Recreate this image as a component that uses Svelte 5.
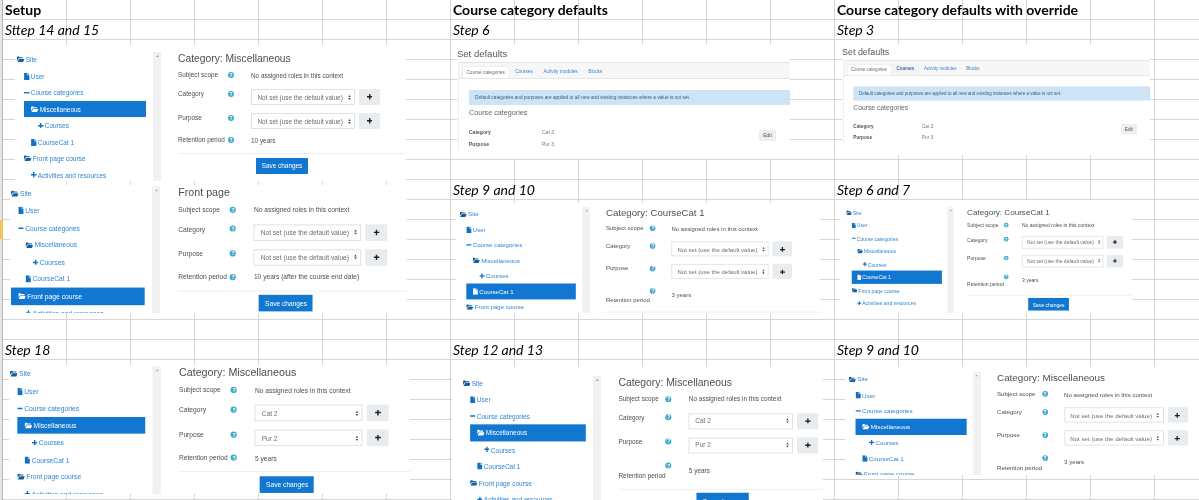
<script lang="ts">
	const tree = [
		{ label: 'Site', depth: 0, icon: 'folder' },
		{ label: 'User', depth: 1, icon: 'file' },
		{ label: 'Course categories', depth: 1, icon: 'minus' },
		{ label: 'Miscellaneous', depth: 2, icon: 'folder' },
		{ label: 'Courses', depth: 3, icon: 'plus' },
		{ label: 'CourseCat 1', depth: 2, icon: 'file' },
		{ label: 'Front page course', depth: 1, icon: 'folder' },
		{ label: 'Activities and resources', depth: 2, icon: 'plus' }
	];

	const notSet = 'Not set (use the default value)';

	// placed on the sheet like pasted pictures: box, scale, first row centre, tree icon x
	const shots = [
		{ x: 15, y: 45, w: 391, h: 136, s: 1, cy: 59.5, ix: 17, tw: 129, sel: 3, title: 'Category: Miscellaneous', cat: notSet, pur: notSet, ret: '10 years', stacked: false, save: true },
		{ x: 10, y: 185, w: 397, h: 128, s: 1.036, cy: 193.7, ix: 11, tw: 129.5, sel: 6, title: 'Front page', cat: notSet, pur: notSet, ret: '10 years (after the course end date)', stacked: false, save: true },
		{ x: 9, y: 365, w: 401, h: 129, s: 1.04, cy: 374, ix: 10, tw: 130.5, sel: 3, title: 'Category: Miscellaneous', cat: 'Cat 2', pur: 'Pur 2', ret: '5 years', stacked: false, save: true },
		{ x: 456, y: 203, w: 364, h: 110, s: 0.936, cy: 214, ix: 460, tw: 124, sel: 5, title: 'Category: CourseCat 1', cat: notSet, pur: notSet, ret: '3 years', stacked: true, save: false },
		{ x: 840, y: 200, w: 292, h: 113, s: 0.784, cy: 212.7, ix: 846, tw: 122.5, sel: 5, title: 'Category: CourseCat 1', cat: notSet, pur: notSet, ret: '3 years', stacked: true, save: true },
		{ x: 452, y: 367, w: 371, h: 133, s: 1.006, cy: 383.3, ix: 463, tw: 122.5, sel: 3, title: 'Category: Miscellaneous', cat: 'Cat 2', pur: 'Pur 2', ret: '5 years', stacked: true, save: true },
		{ x: 845, y: 367, w: 354, h: 108, s: 0.958, cy: 379.3, ix: 849, tw: 122.5, sel: 3, title: 'Category: Miscellaneous', cat: notSet, pur: notSet, ret: '3 years', stacked: true, save: false }
	];

	const defaults = [
		{ x: 457, y: 44, w: 333, h: 115, s: 1, top: 0, hover: false },
		{ x: 842, y: 44, w: 308, h: 111, s: 0.94, top: -1, hover: true }
	];

	const labels = [
		{ text: 'Setup', col: 2, row: 1, head: true },
		{ text: 'Course category defaults', col: 9, row: 1, head: true },
		{ text: 'Course category defaults with override', col: 15, row: 1, head: true },
		{ text: 'Sttep 14 and 15', col: 2, row: 2 },
		{ text: 'Step 6', col: 9, row: 2 },
		{ text: 'Step 3', col: 15, row: 2 },
		{ text: 'Step 9 and 10', col: 9, row: 10 },
		{ text: 'Step 6 and 7', col: 15, row: 10 },
		{ text: 'Step 18', col: 2, row: 18 },
		{ text: 'Step 12 and 13', col: 9, row: 18 },
		{ text: 'Step 9 and 10', col: 15, row: 18 }
	];

	function box(p: { x: number; y: number; w: number; h: number }) {
		return `left:${p.x}px;top:${p.y}px;width:${p.w}px;height:${p.h}px`;
	}
	function inner(p: { w: number; h: number; s: number }) {
		return `width:${p.w / p.s}px;height:${p.h / p.s}px;transform:scale(${p.s})`;
	}
</script>

{#snippet icon(name: string)}
	{#if name === 'folder'}
		<svg class="ico folder" viewBox="0 0 16 14"><path d="M0 2.5C0 1.7.6 1 1.4 1h3.2l1.6 1.6h5.4c.8 0 1.4.6 1.4 1.4v1H4L0 10.500z" /><path d="M4.600 6.200H16l-3 6.800H.8z" /></svg>
	{:else if name === 'file'}
		<svg class="ico file" viewBox="0 0 12 16"><path d="M0 0h7v5h5v11H0z" /><path d="M8 0l4 4H8z" /></svg>
	{:else if name === 'plus'}
		<svg class="ico plus" viewBox="0 0 12 12"><path d="M4.500 0h3v4.500H12v3H7.500V12h-3V7.500H0v-3h4.500z" /></svg>
	{:else}
		<svg class="ico minus" viewBox="0 0 12 12"><path d="M0 4.500h12v3H0z" /></svg>
	{/if}
{/snippet}

{#snippet help()}
	<span class="help">?</span>
{/snippet}

{#snippet field(label: string, value: string)}
	<div class="field">
		<span class="lab">{label}</span>
		{@render help()}
		<div class="control">
			<span class="select">
				<span>{value}</span>
				<svg viewBox="0 0 6 10"><path d="M3 0l2.500 3.800h-5zM3 10L.5 6.200h5z" /></svg>
			</span>
			<span class="add"><svg viewBox="0 0 12 12"><path d="M4.500 0h3v4.500H12v3H7.500V12h-3V7.500H0v-3h4.500z" /></svg></span>
		</div>
	</div>
{/snippet}

<div class="sheet">
	<div class="strip"><span class="marker"></span></div>

	{#each labels as l}
		<div class="cell" class:head={l.head} style="grid-column:{l.col};grid-row:{l.row}">{l.text}</div>
	{/each}

	{#each shots as p}
		<div class="shot" style={box(p)}>
			<div class="inner" class:narrow={p.stacked} style="{inner(p)};padding-top:{(p.cy - p.y) / p.s - 8.25}px;padding-left:{(p.ix - p.x) / p.s}px">
				<ul class="tree" style="width:{p.tw}px">
					{#each tree as t, i}
						<li
							class:sel={i === p.sel}
							style="margin-left:{i === p.sel ? (t.depth - 1) * 7 : 0}px;padding-left:{i === p.sel ? 7 : t.depth * 7}px"
						>
							{@render icon(t.icon)}<span>{t.label}</span>
						</li>
					{/each}
				</ul>
				<div class="track"><svg viewBox="0 0 6 4"><path d="M3 0l3 4H0z" /></svg></div>
				<div class="form">
					<h3>{p.title}</h3>
					<div class="field plain">
						<span class="lab">Subject scope</span>
						{@render help()}
						<span class="val">No assigned roles in this context</span>
					</div>
					{@render field('Category', p.cat)}
					{@render field('Purpose', p.pur)}
					{#if p.stacked}
						<div class="field stack">
							{@render help()}
							<span class="lab">Retention period</span>
							<span class="val">{p.ret}</span>
						</div>
					{:else}
						<div class="field plain ret">
							<span class="lab">Retention period</span>
							{@render help()}
							<span class="val">{p.ret}</span>
						</div>
					{/if}
					<hr />
					{#if p.save}
						<button>Save changes</button>
					{/if}
				</div>
			</div>
		</div>
	{/each}

	{#each defaults as d}
		<div class="shot" style={box(d)}>
			<div class="inner block" style="{inner(d)};margin-top:{d.top}px">
				<h2>Set defaults</h2>
				<div class="card">
					<div class="tabs">
						<span class="tab on">Course categories</span>
						<span class="tab" class:hover={d.hover}>Courses</span>
						<span class="tab">Activity modules</span>
						<span class="tab">Blocks</span>
					</div>
					<div class="pane">
						<div class="alert">Default categories and purposes are applied to all new and existing instances where a value is not set.</div>
						<h4>Course categories</h4>
						<div class="dl">
							<b>Category</b><span>Cat 3</span>
							<b>Purpose</b><span>Pur 3</span>
							<em>Edit</em>
						</div>
					</div>
				</div>
			</div>
		</div>
	{/each}
</div>

<style>
	:global(body) {
		margin: 0;
		background: #fff;
	}

	.sheet {
		position: relative;
		width: 1199px;
		height: 500px;
		overflow: hidden;
		display: grid;
		grid-template-columns: 3px repeat(19, 64px);
		grid-auto-rows: 20px;
		background-color: #fff;
		background-image:
			linear-gradient(to right, #d6d6d6 1px, transparent 1px),
			linear-gradient(to bottom, #d6d6d6 1px, transparent 1px);
		background-size: 64px 100%, 100% 20px;
		background-position: 2px 0, 0 19px;
	}

	.strip {
		grid-column: 1;
		grid-row: 1 / span 25;
		background: #e6e6e6;
		border-right: 1px solid #b4b4b4;
		width: 2px;
		position: relative;
	}

	.marker {
		position: absolute;
		left: 0;
		top: 220px;
		width: 3px;
		height: 19px;
		background: #f3c35c;
	}

	.cell {
		padding-left: 2px;
		font: italic 14px/19px Lato, "Liberation Sans", sans-serif;
		color: #000;
		white-space: nowrap;
		filter: blur(0.2px);
	}

	.head {
		font-style: normal;
		font-weight: 700;
	}

	.shot {
		position: absolute;
		background: #fff;
		overflow: hidden;
		filter: blur(0.3px);
		font-family: "Liberation Sans", Arial, sans-serif;
		color: #4a4f54;
	}

	.inner {
		display: flex;
		box-sizing: border-box;
		transform-origin: 0 0;
		font-size: 6.400px;
	}

	.inner.block {
		display: block;
	}

	.tree {
		list-style: none;
		margin: 0;
		padding: 0;
		flex: none;
		color: #2f86d6;
		font-size: 6.500px;
	}

	.tree li {
		height: 16.500px;
		display: flex;
		align-items: center;
		gap: 1.200px;
		white-space: nowrap;
		box-sizing: border-box;
	}

	.tree li.sel {
		background: #1177d1;
		color: #fff;
	}

	.ico {
		flex: none;
		fill: #1270c4;
	}

	.sel .ico {
		fill: #fff;
	}

	.folder {
		width: 7.500px;
		height: 6.500px;
		fill: #145f9f;
	}

	.file {
		width: 5.500px;
		height: 7px;
	}

	.plus {
		width: 5.500px;
		height: 5.500px;
	}

	.minus {
		width: 5.500px;
		height: 5.500px;
	}

	.track {
		flex: none;
		width: 8px;
		margin-left: 7px;
		margin-top: 0.750px;
		background: #f1f1f1;
		height: 400px;
		text-align: center;
	}

	.track svg {
		width: 3px;
		height: 2px;
		display: block;
		margin: 3px auto 0;
		fill: #a3a3a3;
	}

	.form {
		flex: 1;
		min-width: 0;
		margin-left: 17px;
	}

	h3 {
		margin: 0.750px 0 0;
		font-size: 10.300px;
		line-height: 14px;
		font-weight: 400;
		color: #4a4f54;
		white-space: nowrap;
	}

	.field {
		display: grid;
		grid-template-columns: 48.500px 9px 1fr;
		margin-top: 7px;
		white-space: nowrap;
	}

	.narrow .field {
		grid-template-columns: 45.500px 9px 1fr;
	}

	.field + .field {
		margin-top: 8px;
	}

	.field.plain {
		margin-top: 3px;
		height: 12px;
		align-items: center;
	}

	.field.ret {
		margin-top: 5px;
	}

	.lab {
		line-height: 9px;
	}

	.plain .lab {
		line-height: 12px;
	}

	.help {
		width: 6px;
		height: 6px;
		margin: 1.500px auto 0;
		border-radius: 50%;
		background: #3fa9cf;
		color: #fff;
		font: 700 5px/6px "Liberation Sans", sans-serif;
		text-align: center;
	}

	.plain .help {
		margin-top: 0;
	}

	.control {
		display: flex;
		gap: 4px;
		margin-left: 15.500px;
	}

	.val {
		margin-left: 15.500px;
	}

	.select {
		box-sizing: border-box;
		width: 104px;
		height: 16px;
		padding: 0 3.500px 0 5.500px;
		display: flex;
		align-items: center;
		justify-content: space-between;
		border: 1px solid #dfe2e5;
		color: #6a6f74;
	}

	.select svg {
		width: 3px;
		height: 5px;
		fill: #444;
	}

	.add {
		width: 21px;
		height: 16px;
		background: #e9ecef;
		display: flex;
		align-items: center;
		justify-content: center;
	}

	.add svg {
		width: 5.500px;
		height: 5.500px;
		fill: #1d2125;
	}

	.stack {
		grid-template-rows: 9px 10px;
		margin-top: 8.500px;
		align-items: center;
	}

	.stack .help {
		grid-column: 2;
		grid-row: 1;
		margin-top: 0;
	}

	.stack .lab {
		grid-column: 1 / span 2;
		grid-row: 2;
	}

	.stack .val {
		grid-column: 3;
		grid-row: 1 / span 2;
		align-self: start;
		line-height: 17px;
	}

	hr {
		border: 0;
		border-top: 1px solid #eceeef;
		margin: 7px 0 3.500px;
	}

	.stack + hr {
		margin-top: 8px;
	}

	button {
		display: block;
		margin-left: 78px;
		width: 52px;
		height: 16px;
		padding: 0;
		border: 0;
		background: #1177d1;
		color: #fff;
		font: inherit;
		font-size: 6.400px;
	}

	h2 {
		margin: 3px 0 0;
		font-size: 9.500px;
		line-height: 14px;
		font-weight: 400;
		color: #55595d;
	}

	.card {
		margin: 1px 0 0 1px;
		border-left: 1px solid #eceeef;
	}

	.tabs {
		height: 17px;
		box-sizing: border-box;
		padding-left: 2.500px;
		display: flex;
		align-items: flex-end;
		background: #f7f7f7;
		border-top: 1px solid #e6e6e6;
		border-bottom: 1px solid #e6e6e6;
		font-size: 4.750px;
		color: #3a85d0;
	}

	.tab {
		height: 12.500px;
		line-height: 12px;
		padding: 0 5.300px;
		box-sizing: border-box;
	}

	.tab.on {
		background: #fff;
		color: #6b7075;
		border: 1px solid #eceeef;
		border-bottom: 0;
		padding: 0 3.900px;
	}

	.tab.hover {
		color: #31679e;
		font-weight: 700;
		background: #f3f3f3;
		padding: 0 5.100px;
	}

	.pane {
		padding: 11px 0 0 10px;
	}

	.alert {
		height: 15px;
		line-height: 15px;
		padding-left: 6px;
		background: #cde3f6;
		color: #3a5f7e;
		font-size: 4.750px;
		white-space: nowrap;
	}

	h4 {
		margin: 3px 0 0;
		font-size: 7.200px;
		line-height: 10px;
		font-weight: 400;
		color: #62666a;
	}

	.dl {
		position: relative;
		margin-top: 8px;
		display: grid;
		grid-template-columns: 73px 1fr;
		grid-auto-rows: 12px;
		font-size: 5px;
		line-height: 12px;
		color: #777;
	}

	.dl b {
		color: #555;
	}

	.dl em {
		position: absolute;
		right: 14px;
		top: 3.500px;
		width: 17px;
		height: 11px;
		line-height: 11px;
		text-align: center;
		font-style: normal;
		background: #eceeef;
		color: #555;
	}
</style>
